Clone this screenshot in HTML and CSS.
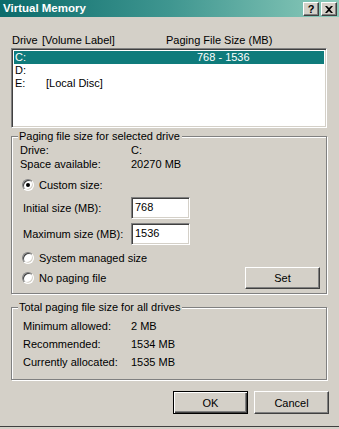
FILE: index.html
```html
<!DOCTYPE html>
<html>
<head>
<meta charset="utf-8">
<link rel="stylesheet" href="styles.css">
</head>
<body>
<div class="window">
  <div class="titlebar">
    <span class="title">Virtual Memory</span>
    <div class="tbtns">
      <span class="tbtn help">?</span>
      <span class="tbtn close"><svg width="8" height="7" viewBox="0 0 8 7"><path d="M0 0h2l2 2 2-2h2L5 3.5 8 7H6L4 5 2 7H0l3-3.5z" fill="#000"/></svg></span>
    </div>
  </div>
  <div class="body">
    <div class="listhead">
      <span class="h-drive">Drive</span><span class="h-label">[Volume Label]</span><span class="h-size">Paging File Size (MB)</span>
    </div>
    <div class="listbox">
      <div class="row sel"><span>C:</span><span></span><span>768 - 1536</span></div>
      <div class="row"><span>D:</span><span></span><span></span></div>
      <div class="row"><span>E:</span><span>[Local Disc]</span><span></span></div>
    </div>

    <div class="group g1">
      <span class="legend">Paging file size for selected drive</span>
      <div class="info"><span>Drive:</span><span>C:</span></div>
      <div class="info"><span>Space available:</span><span>20270 MB</span></div>
      <div class="radiorow first"><span class="radio on"></span><span>Custom size:</span></div>
      <div class="field"><span>Initial size (MB):</span><span class="input">768</span></div>
      <div class="field second"><span>Maximum size (MB):</span><span class="input">1536</span></div>
      <div class="radiorow sys"><span class="radio"></span><span>System managed size</span></div>
      <div class="lastrow">
        <div class="radiorow"><span class="radio"></span><span>No paging file</span></div>
        <span class="btn set">Set</span>
      </div>
    </div>

    <div class="group g2">
      <span class="legend">Total paging file size for all drives</span>
      <div class="total"><span>Minimum allowed:</span><span>2 MB</span></div>
      <div class="total"><span>Recommended:</span><span>1534 MB</span></div>
      <div class="total"><span>Currently allocated:</span><span>1535 MB</span></div>
    </div>

    <div class="buttons">
      <span class="btn default">OK</span>
      <span class="btn">Cancel</span>
    </div>
  </div>
</div>
</body>
</html>
```
FILE: styles.css
```css
html, body {
  margin: 0;
  padding: 0;
  background: #d4d0c8;
}
.window {
  width: 339px;
  height: 429px;
  box-sizing: border-box;
  background: #d4d0c8;
  font-family: "Liberation Sans", Arial, sans-serif;
  font-size: 11px;
  color: #000;
  overflow: hidden;
}
.titlebar {
  height: 17px;
  display: flex;
  align-items: flex-start;
  justify-content: space-between;
  background: linear-gradient(to right, #0b6b6b 0%, #3f9690 50%, #8ccbbb 100%);
}
.title {
  color: #fff;
  font-weight: bold;
  font-size: 11.5px;
  line-height: 16px;
  padding-left: 3px;
}
.tbtns {
  display: flex;
  gap: 2px;
  padding: 2px 2px 0 0;
}
.tbtn {
  width: 16px;
  height: 14px;
  box-sizing: border-box;
  background: #d4d0c8;
  border: 1px solid;
  border-color: #fff #404040 #404040 #fff;
  box-shadow: inset -1px -1px 0 #808080;
  display: flex;
  align-items: center;
  justify-content: center;
  font-weight: bold;
  font-size: 11px;
  line-height: 12px;
}
.tbtn.help { padding-bottom: 1px; }
.body {
  padding: 17px 12px 0 11px;
  height: 410px;
  box-sizing: border-box;
  border-bottom: 1px solid #404040;
}
.listhead {
  display: flex;
  height: 14px;
  line-height: 13px;
  padding-left: 1px;
}
.h-drive { width: 30px; }
.h-label { width: 124px; }
.listbox {
  height: 80px;
  box-sizing: border-box;
  background: #fff;
  border: 1px solid;
  border-color: #808080 #fff #fff #808080;
  box-shadow: inset 1px 1px 0 #404040, inset -1px -1px 0 #d4d0c8;
  padding: 2px 2px 0 2px;
}
.row {
  display: grid;
  grid-template-columns: 31px 151px 1fr;
  height: 13px;
  line-height: 13px;
  padding-left: 1px;
}
.row.sel {
  background: #0f7b7b;
  color: #fff;
}
.group {
  position: relative;
  border: 1px solid #808080;
  box-shadow: inset 1px 1px 0 #fff, 1px 1px 0 #fff;
}
.legend {
  position: absolute;
  top: -7px;
  left: 6px;
  padding: 0 2px 0 1px;
  background: #d4d0c8;
  line-height: 13px;
}
.g1 {
  margin-top: 8px;
  height: 158px;
  box-sizing: border-box;
  padding: 6px 0 0 1px;
}
.info {
  display: grid;
  grid-template-columns: 111px 1fr;
  padding-left: 7px;
  height: 14px;
  line-height: 14px;
}
.radiorow {
  display: flex;
  align-items: center;
  height: 14px;
  padding-left: 9px;
  gap: 5px;
}
.radiorow.first { margin-top: 7px; }
.radio {
  width: 12px;
  height: 12px;
  box-sizing: border-box;
  border-radius: 50%;
  background: #fff;
  border: 1px solid;
  border-color: #808080 #fff #fff #808080;
  box-shadow: inset 1px 1px 0 #404040, inset -1px -1px 0 #d4d0c8;
  position: relative;
}
.radio.on::after {
  content: "";
  position: absolute;
  left: 3px;
  top: 3px;
  width: 4px;
  height: 4px;
  border-radius: 50%;
  background: #000;
}
.field {
  display: grid;
  grid-template-columns: 108px 59px;
  align-items: center;
  padding-left: 10px;
  margin-top: 5px;
  height: 22px;
}
.field.second { margin-top: 4px; }
.input {
  height: 22px;
  box-sizing: border-box;
  background: #fff;
  border: 1px solid;
  border-color: #808080 #fff #fff #808080;
  box-shadow: inset 1px 1px 0 #404040, inset -1px -1px 0 #d4d0c8;
  padding: 3px 0 0 3px;
  line-height: 13px;
}
.radiorow.sys { margin-top: 6px; }
.lastrow {
  display: flex;
  align-items: center;
  justify-content: space-between;
  margin-top: 2px;
  height: 22px;
  padding-right: 6px;
}
.btn {
  display: flex;
  align-items: center;
  justify-content: center;
  width: 75px;
  height: 23px;
  box-sizing: border-box;
  background: #d4d0c8;
  border: 1px solid;
  border-color: #fff #404040 #404040 #fff;
  box-shadow: inset -1px -1px 0 #808080;
}
.btn.set { height: 22px; }
.btn.default {
  border: 1px solid #000;
  box-shadow: inset 1px 1px 0 #fff, inset -1px -1px 0 #404040, inset -2px -2px 0 #808080;
}
.g2 {
  margin-top: 13px;
  height: 73px;
  box-sizing: border-box;
  padding: 9px 0 0 11px;
}
.total {
  display: grid;
  grid-template-columns: 108px 1fr;
  height: 18px;
  line-height: 18px;
}
.buttons {
  display: flex;
  justify-content: flex-end;
  gap: 6px;
  margin-top: 11px;
  margin-right: -2px;
}
```
